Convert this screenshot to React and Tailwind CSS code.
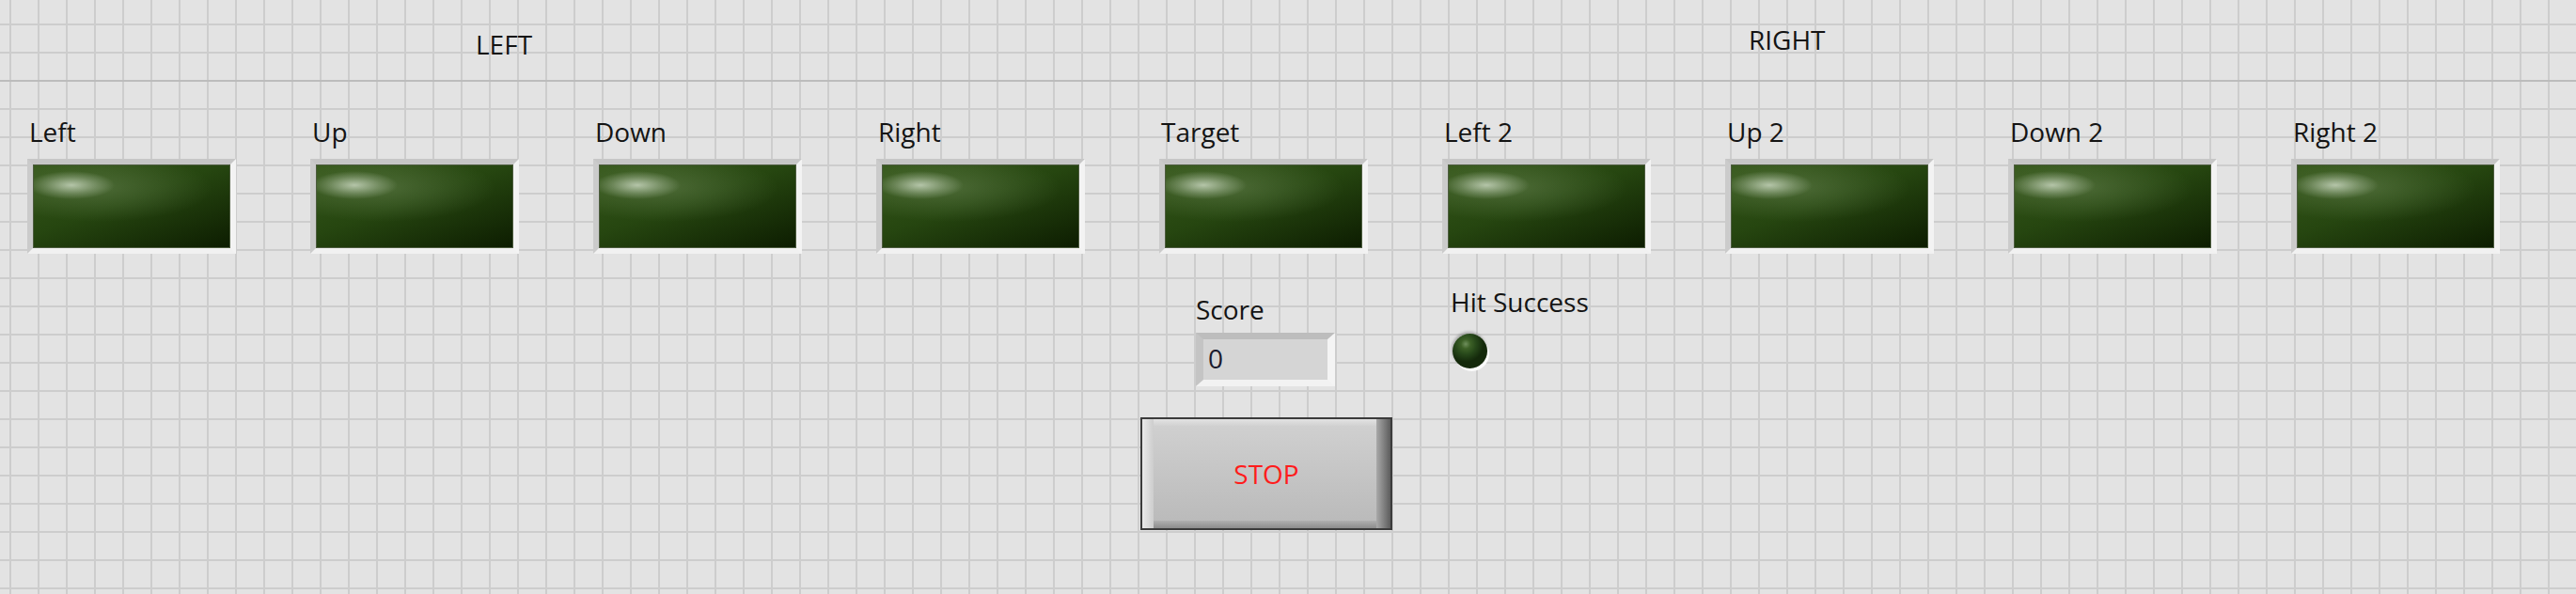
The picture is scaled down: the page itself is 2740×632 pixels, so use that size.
import React from 'react';

const labels = ['Left', 'Up', 'Down', 'Right', 'Target', 'Left 2', 'Up 2', 'Down 2', 'Right 2'];

const Indicator = ({ label }) => (
  <div className="flex flex-col w-[222px]">
    <div className="pl-[2px] h-[28px] text-[28px] leading-[28px] whitespace-nowrap">{label}</div>
    <div className="mt-[15px] border-[6px] border-t-[#c6c6c6] border-l-[#cbcbcb] border-r-[#f3f3f3] border-b-[#f1f1f1]">
      <div className="h-[89px] border border-[#4d5c3f] bg-[radial-gradient(ellipse_46px_15px_at_40px_21px,rgba(200,214,190,0.85),rgba(200,214,190,0.3)_60%,rgba(200,214,190,0)),radial-gradient(ellipse_120px_36px_at_70px_24px,rgba(150,175,130,0.3),rgba(150,175,130,0)),linear-gradient(160deg,#35571a,#264610_45%,#0d1d01)]" />
    </div>
  </div>
);

const App = () => {
  return (
    <div className="w-[2740px] h-[632px] overflow-hidden bg-[#e3e3e3] bg-[linear-gradient(to_right,#cdcdcd_2px,transparent_2px),linear-gradient(to_bottom,#cdcdcd_2px,transparent_2px)] bg-[length:30px_30px] bg-[position:10px_25px] text-[#141414] font-['Open_Sans',sans-serif]">
      {/* headers */}
      <div className="flex h-[87px] border-b-2 border-[#bcbcbc] text-[28px] leading-[28px]">
        <div className="w-[1860px] pl-[506px] pt-[33px]">LEFT</div>
        <div className="pt-[28px]">RIGHT</div>
      </div>

      {/* indicator row */}
      <div className="flex gap-[79px] pl-[29px] pt-[39px]">
        {labels.map((l) => (
          <Indicator key={l} label={l} />
        ))}
      </div>

      {/* score, led, stop */}
      <div className="ml-[1213px] mt-[37px] flex flex-col items-start">
        <div className="flex items-start">
          <div className="ml-[59px] pt-[8px] flex flex-col w-[148px]">
            <div className="h-[28px] text-[28px] leading-[28px]">Score</div>
            <div className="mt-[11px] border-t-[7px] border-l-[8px] border-r-[8px] border-b-[7px] border-t-[#bdbdbd] border-l-[#c4c4c4] border-r-[#f4f4f4] border-b-[#f2f2f2]">
              <div className="h-[43px] bg-[#d5d5d5] pl-[5px] pt-[6px] text-[28px] leading-[28px] text-[#1b1b2e]">0</div>
            </div>
          </div>
          <div className="ml-[123px] flex flex-col">
            <div className="h-[28px] text-[28px] leading-[28px] whitespace-nowrap">Hit Success</div>
            <div className="mt-[19px] w-[44px] h-[44px] pl-[2px] pt-[1px]">
              <div className="w-[37px] h-[37px] rounded-full bg-[radial-gradient(circle_at_38%_30%,#6f8f5c_0px,#3d6127_5px,#27481a_11px,#14290b_19px)] shadow-[-1px_-2px_3px_rgba(0,0,0,0.25),2px_3px_0_#fbfbfb]" />
            </div>
          </div>
        </div>

        <button className="mt-[33px] w-[268px] h-[120px] border-2 border-[#3b3b3b] p-0 bg-[linear-gradient(to_left,#5c5c5c,#a9a9a9_15px,transparent_15px),linear-gradient(to_right,#eaeaea,#cdcdcd_12px,transparent_12px),linear-gradient(to_top,#8c8c8c,#b0b0b0_8px,transparent_8px),linear-gradient(to_bottom,#e2e2e2,#d2d2d2_7px,transparent_7px),linear-gradient(to_bottom,#d1d1d1,#b9b9b9)]">
          <div className="w-full h-full flex items-center justify-center">
            <span className="text-[28px] leading-[28px] text-[#ff1c1c]">STOP</span>
          </div>
        </button>
      </div>
    </div>
  );
};

export default App;
